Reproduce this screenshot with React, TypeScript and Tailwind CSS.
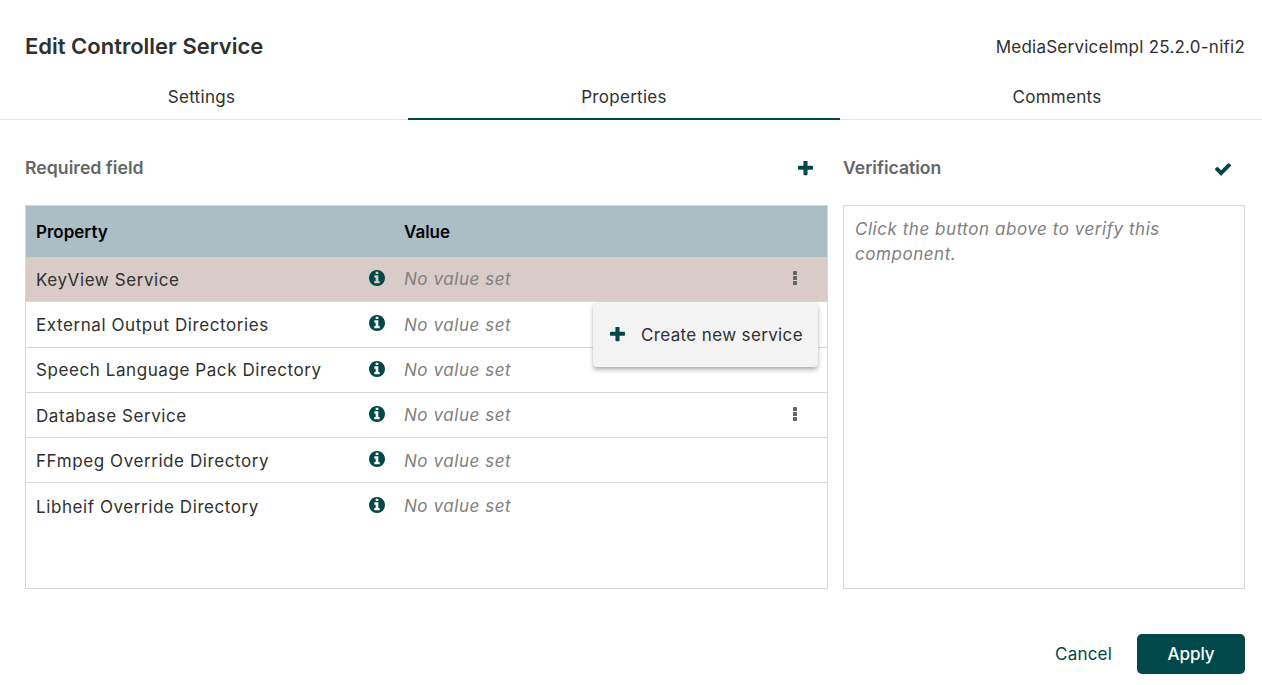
import type { ReactNode } from "react";

interface PropertyRow {
  name: string;
  selected?: boolean;
  menu?: boolean;
}

const rows: PropertyRow[] = [
  { name: "KeyView Service", selected: true, menu: true },
  { name: "External Output Directories" },
  { name: "Speech Language Pack Directory" },
  { name: "Database Service", menu: true },
  { name: "FFmpeg Override Directory" },
  { name: "Libheif Override Directory" },
];

// font-awesome 4 shapes, the icons in the picture are heavier than the fa5 set
function Icon({ box, size, children }: { box: string; size: number; children: ReactNode }) {
  return (
    <svg viewBox={box} width={size} height={size} fill="#004849" className="block shrink-0">
      {children}
    </svg>
  );
}

function InfoIcon() {
  return (
    <Icon box="0 0 1536 1536" size={16}>
      <path d="M1024 1248v-160q0-14-9-23t-23-9h-96v-512q0-14-9-23t-23-9h-320q-14 0-23 9t-9 23v160q0 14 9 23t23 9h96v320h-96q-14 0-23 9t-9 23v160q0 14 9 23t23 9h448q14 0 23-9t9-23zm-128-896v-160q0-14-9-23t-23-9h-192q-14 0-23 9t-9 23v160q0 14 9 23t23 9h192q14 0 23-9t9-23zm640 416q0 209-103 385.5t-279.5 279.5-385.5 103-385.5-103-279.5-279.5-103-385.5 103-385.5 279.5-279.5 385.5-103 385.5 103 279.5 279.5 103 385.5z" />
    </Icon>
  );
}

function PlusIcon() {
  return (
    <Icon box="192 192 1408 1408" size={15}>
      <path d="M1600 736v192q0 40-28 68t-68 28h-416v416q0 40-28 68t-68 28h-192q-40 0-68-28t-28-68v-416h-416q-40 0-68-28t-28-68v-192q0-40 28-68t68-28h416v-416q0-40 28-68t68-28h192q40 0 68 28t28 68v416h416q40 0 68 28t28 68z" />
    </Icon>
  );
}

function CheckIcon() {
  return (
    <Icon box="121 300 1550 1200" size={16}>
      <path d="M1671 566q0 40-28 68l-724 724-136 136q-28 28-68 28t-68-28l-136-136-362-362q-28-28-28-68t28-68l136-136q28-28 68-28t68 28l294 295 656-657q28-28 68-28t68 28l136 136q28 28 28 68z" />
    </Icon>
  );
}

function DotsIcon() {
  return (
    <svg viewBox="0 0 4 14" width={4} height={14} fill="#666666" className="block">
      <rect width="4" height="4" rx="0.6" />
      <rect y="5" width="4" height="4" rx="0.6" />
      <rect y="10" width="4" height="4" rx="0.6" />
    </svg>
  );
}

function Row({ row, last }: { row: PropertyRow; last: boolean }) {
  return (
    <div
      className={`flex h-[45.3px] shrink-0 items-center ${row.selected ? "bg-[#d8cbc8]" : "bg-white"} ${last ? "" : "border-b border-[#d8d8d8]"}`}
    >
      <div className="w-[333px] truncate pl-[10px] pt-[3px] text-[17px] tracking-[0.58px] text-[#303030]">{row.name}</div>
      <div className="flex w-[35px] justify-center pb-[2px]">
        <InfoIcon />
      </div>
      <div className="ml-[10px] w-[384px] pt-[2px] text-[17px] italic tracking-[0.56px] text-[#808080]">No value set</div>
      <div className="flex w-[14px] justify-center pb-[2px]">{row.menu && <DotsIcon />}</div>
    </div>
  );
}

export default function App() {
  return (
    <div className="flex h-[685px] w-[1262px] flex-col overflow-hidden bg-white font-['Inter',sans-serif]">
      <div className="flex h-[74px] items-start justify-between pl-[25px] pr-[17px] pt-[31px]">
        <h1 className="text-[22px] leading-[30px] font-semibold text-[#303030]">Edit Controller Service</h1>
        <span className="pt-[1px] text-[17px] leading-[30px] tracking-[0.24px] text-[#303030]">MediaServiceImpl 25.2.0-nifi2</span>
      </div>

      <div className="flex h-[46px] border-b border-[#e3e3e3] text-[17px] tracking-[0.3px] text-[#303030]">
        <div className="flex w-[408px] items-center justify-center pr-[5px] pt-[2px]">Settings</div>
        <div className="mb-[-1px] flex w-[432px] items-center justify-center border-b-2 border-[#004849] pt-[4px]">Properties</div>
        <div className="flex flex-1 items-center justify-center pl-[12px] pt-[2px]">Comments</div>
      </div>

      <div className="flex gap-[15px] pl-[25px] pr-[17px] pt-[36px]">
        <div className="flex w-[803px] flex-col">
          <div className="flex h-[25px] items-center justify-between pr-[15px]">
            <span className="text-[17.7px] font-semibold text-[#666666]">Required field</span>
            <PlusIcon />
          </div>
          <div className="relative mt-[24px] flex h-[384px] flex-col border border-[#d8d8d8]">
            <div className="flex h-[51px] shrink-0 items-center bg-[#abbdc5] pt-[2px] text-[17px] font-semibold text-black">
              <div className="w-[378px] pl-[10px]">Property</div>
              <div>Value</div>
            </div>
            {rows.map((row, i) => (
              <Row key={row.name} row={row} last={i === rows.length - 1} />
            ))}
            <div className="absolute left-[567px] top-[96px] flex h-[65px] w-[225px] items-center rounded-[4px] bg-[#f3f3f3] pl-[17px] shadow-[0_2px_4px_-1px_rgba(0,0,0,0.3),0_4px_5px_0_rgba(0,0,0,0.14)]">
              <PlusIcon />
              <span className="ml-[16px] pt-[3px] text-[17px] tracking-[0.36px] text-[#303030]">Create new service</span>
            </div>
          </div>
        </div>

        <div className="flex flex-1 flex-col">
          <div className="flex h-[25px] items-center justify-between pr-[14px]">
            <span className="text-[17.6px] font-semibold text-[#666666]">Verification</span>
            <CheckIcon />
          </div>
          <div className="mt-[24px] h-[384px] border border-[#d8d8d8] px-[11px] pt-[11px] text-[17px] leading-[25px] italic tracking-[0.54px] text-[#808080]">
            Click the button above to verify this component.
          </div>
        </div>
      </div>

      <div className="flex justify-end pr-[17px] pt-[45px]">
        <div className="flex items-center gap-[25px]">
          <button className="pt-[2px] text-[17px] tracking-[0.2px] text-[#004849]">Cancel</button>
          <button className="h-[40px] w-[108px] rounded-[5px] bg-[#004849] pt-[1px] text-[17px] font-medium text-white">Apply</button>
        </div>
      </div>
    </div>
  );
}
